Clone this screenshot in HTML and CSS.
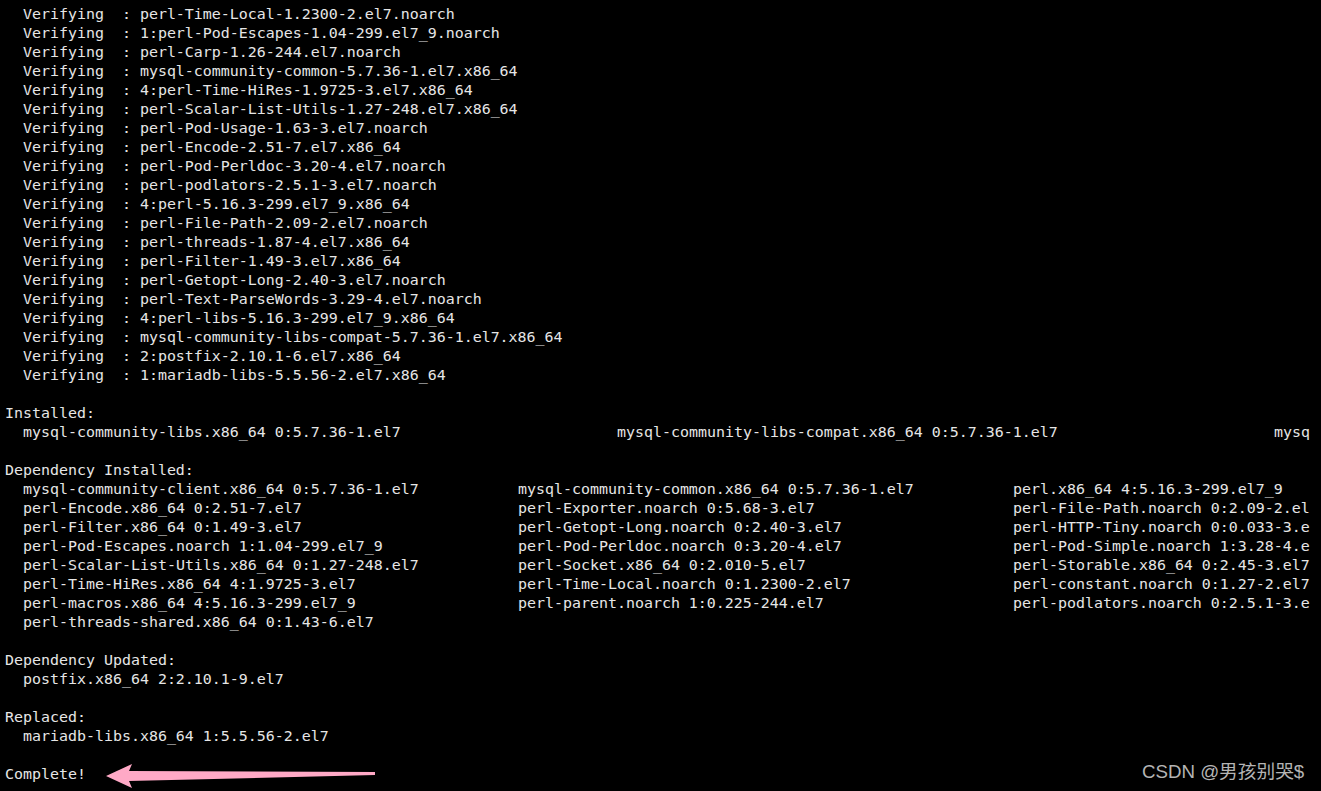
FILE: index.html
```html
<!DOCTYPE html>
<html lang="en">
<head>
<meta charset="utf-8">
<title>yum install mysql</title>
<link rel="stylesheet" href="styles.css">
</head>
<body>
<main class="term">
<div class="ln">  Verifying  : perl-Time-Local-1.2300-2.el7.noarch</div>
<div class="ln">  Verifying  : 1:perl-Pod-Escapes-1.04-299.el7_9.noarch</div>
<div class="ln">  Verifying  : perl-Carp-1.26-244.el7.noarch</div>
<div class="ln">  Verifying  : mysql-community-common-5.7.36-1.el7.x86_64</div>
<div class="ln">  Verifying  : 4:perl-Time-HiRes-1.9725-3.el7.x86_64</div>
<div class="ln">  Verifying  : perl-Scalar-List-Utils-1.27-248.el7.x86_64</div>
<div class="ln">  Verifying  : perl-Pod-Usage-1.63-3.el7.noarch</div>
<div class="ln">  Verifying  : perl-Encode-2.51-7.el7.x86_64</div>
<div class="ln">  Verifying  : perl-Pod-Perldoc-3.20-4.el7.noarch</div>
<div class="ln">  Verifying  : perl-podlators-2.5.1-3.el7.noarch</div>
<div class="ln">  Verifying  : 4:perl-5.16.3-299.el7_9.x86_64</div>
<div class="ln">  Verifying  : perl-File-Path-2.09-2.el7.noarch</div>
<div class="ln">  Verifying  : perl-threads-1.87-4.el7.x86_64</div>
<div class="ln">  Verifying  : perl-Filter-1.49-3.el7.x86_64</div>
<div class="ln">  Verifying  : perl-Getopt-Long-2.40-3.el7.noarch</div>
<div class="ln">  Verifying  : perl-Text-ParseWords-3.29-4.el7.noarch</div>
<div class="ln">  Verifying  : 4:perl-libs-5.16.3-299.el7_9.x86_64</div>
<div class="ln">  Verifying  : mysql-community-libs-compat-5.7.36-1.el7.x86_64</div>
<div class="ln">  Verifying  : 2:postfix-2.10.1-6.el7.x86_64</div>
<div class="ln">  Verifying  : 1:mariadb-libs-5.5.56-2.el7.x86_64</div>
<div class="ln"> </div>
<div class="ln">Installed:</div>
<div class="row wide"><span>mysql-community-libs.x86_64 0:5.7.36-1.el7</span><span>mysql-community-libs-compat.x86_64 0:5.7.36-1.el7</span><span>mysql-community-server.x86_64 0:5.7.36-1.el7</span></div>
<div class="ln"> </div>
<div class="ln">Dependency Installed:</div>
<div class="row"><span>mysql-community-client.x86_64 0:5.7.36-1.el7</span><span>mysql-community-common.x86_64 0:5.7.36-1.el7</span><span>perl.x86_64 4:5.16.3-299.el7_9</span></div>
<div class="row"><span>perl-Encode.x86_64 0:2.51-7.el7</span><span>perl-Exporter.noarch 0:5.68-3.el7</span><span>perl-File-Path.noarch 0:2.09-2.el7</span></div>
<div class="row"><span>perl-Filter.x86_64 0:1.49-3.el7</span><span>perl-Getopt-Long.noarch 0:2.40-3.el7</span><span>perl-HTTP-Tiny.noarch 0:0.033-3.el7</span></div>
<div class="row"><span>perl-Pod-Escapes.noarch 1:1.04-299.el7_9</span><span>perl-Pod-Perldoc.noarch 0:3.20-4.el7</span><span>perl-Pod-Simple.noarch 1:3.28-4.el7</span></div>
<div class="row"><span>perl-Scalar-List-Utils.x86_64 0:1.27-248.el7</span><span>perl-Socket.x86_64 0:2.010-5.el7</span><span>perl-Storable.x86_64 0:2.45-3.el7</span></div>
<div class="row"><span>perl-Time-HiRes.x86_64 4:1.9725-3.el7</span><span>perl-Time-Local.noarch 0:1.2300-2.el7</span><span>perl-constant.noarch 0:1.27-2.el7</span></div>
<div class="row"><span>perl-macros.x86_64 4:5.16.3-299.el7_9</span><span>perl-parent.noarch 1:0.225-244.el7</span><span>perl-podlators.noarch 0:2.5.1-3.el7</span></div>
<div class="row"><span>perl-threads-shared.x86_64 0:1.43-6.el7</span></div>
<div class="ln"> </div>
<div class="ln">Dependency Updated:</div>
<div class="ln">  postfix.x86_64 2:2.10.1-9.el7</div>
<div class="ln"> </div>
<div class="ln">Replaced:</div>
<div class="ln">  mariadb-libs.x86_64 1:5.5.56-2.el7</div>
<div class="ln"> </div>
<div class="ln">Complete!</div>
</main>
<svg class="arrow" width="280" height="32" viewBox="0 0 280 32" aria-hidden="true">
  <polygon points="6,17 32,5 29,12 275,13 275,16 29,22 32,29" fill="#ffa9c6"/>
</svg>
<div class="mark">CSDN @男孩别哭$</div>
</body>
</html>
```
FILE: styles.css
```css
html, body {
  margin: 0;
  padding: 0;
  background: #000;
}
body {
  width: 1321px;
  height: 791px;
  overflow: hidden;
  position: relative;
}
.term {
  box-sizing: border-box;
  width: 1310px;
  padding: 5px 0 0 5px;
  overflow: hidden;
  font-family: "DejaVu Sans Mono", monospace;
  font-size: 14.95px;
  line-height: 19px;
  color: #e6e6e6;
}
.ln {
  white-space: pre;
  height: 19px;
}
.row {
  display: grid;
  grid-template-columns: 495px 495px max-content;
  padding-left: 18px;
  white-space: pre;
  height: 19px;
}
.row.wide {
  grid-template-columns: 594px 657px max-content;
}
.arrow {
  position: absolute;
  left: 100px;
  top: 759px;
}
.mark {
  position: absolute;
  left: 1142px;
  top: 761px;
  font-family: "Liberation Sans", "Noto Sans CJK SC", sans-serif;
  font-size: 18.7px;
  line-height: 22px;
  color: #b4b4b4;
  white-space: nowrap;
}
```
